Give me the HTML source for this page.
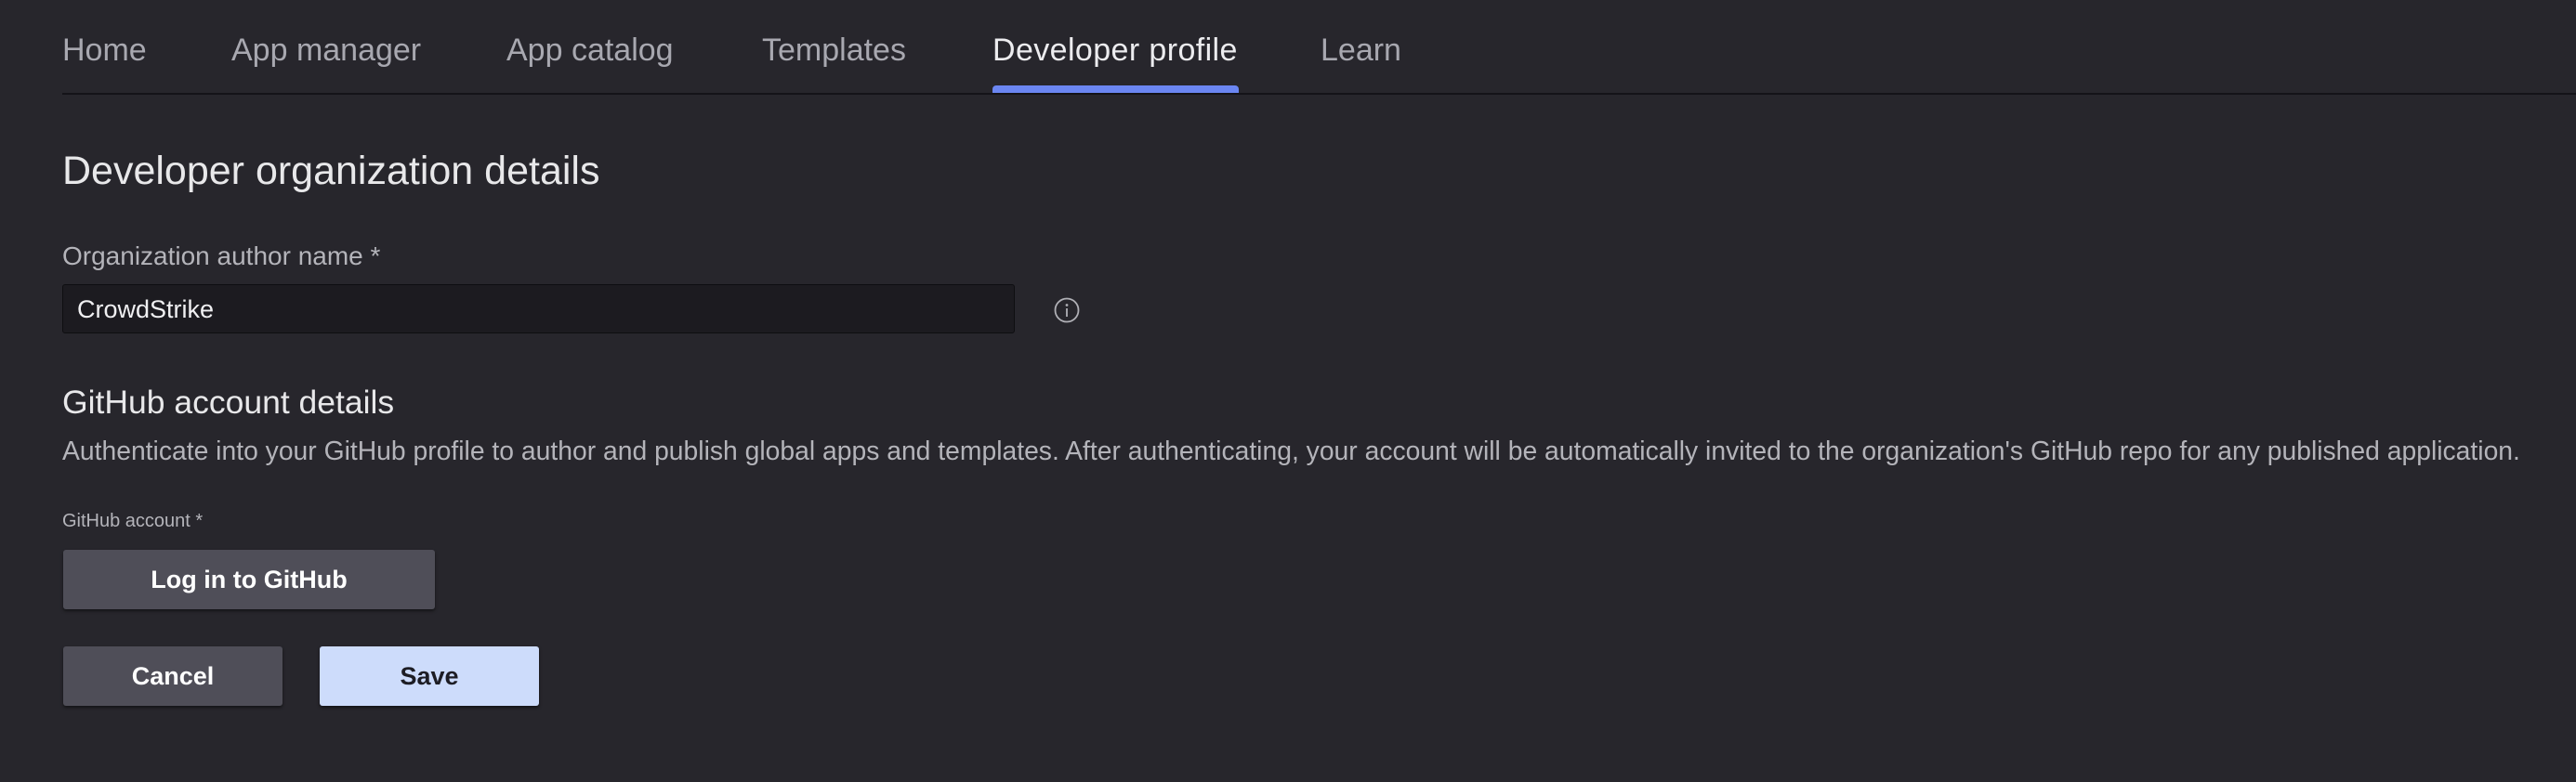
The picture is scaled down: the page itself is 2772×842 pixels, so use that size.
<!DOCTYPE html>
<html><head><meta charset="utf-8"><style>
html,body{margin:0;padding:0}
body{width:2772px;height:842px;background:#27262c;font-family:"Liberation Sans",Arial,sans-serif;position:relative;overflow:hidden;color:#e6e6e9}
.a{position:absolute;white-space:nowrap}
.nav{top:32px;font-size:34px;color:#a8a8b0;line-height:44px}
.btn{position:absolute;background:#4f4e58;color:#fff;font-weight:bold;font-size:27px;text-align:center;border-radius:3px;box-shadow:0 2px 3px rgba(0,0,0,.5)}
</style></head><body>
<div class="a nav" style="left:67px">Home</div>
<div class="a nav" style="left:249px">App manager</div>
<div class="a nav" style="left:545px">App catalog</div>
<div class="a nav" style="left:820px">Templates</div>
<div class="a nav" style="left:1068px;color:#ececef;letter-spacing:0.4px">Developer profile</div>
<div class="a nav" style="left:1421px">Learn</div>
<div class="a" style="left:1068px;top:92px;width:265px;height:8px;background:#6b86f2;border-radius:4px 4px 0 0"></div>
<div class="a" style="left:67px;top:100px;width:2705px;height:2px;background:#141318"></div>

<div class="a" style="left:67px;top:157px;font-size:43px;line-height:54px;color:#e8e8ea">Developer organization details</div>
<div class="a" style="left:67px;top:258px;font-size:28px;line-height:36px;color:#b4b4ba">Organization author name *</div>
<div class="a" style="left:67px;top:306px;width:1023px;height:51px;background:#1c1b20;border:1px solid #0e0e11;border-radius:3px"></div>
<div class="a" style="left:83px;top:315px;font-size:27px;line-height:36px;color:#f0f0f2">CrowdStrike</div>
<svg class="a" style="left:1133px;top:319px" width="30" height="30" viewBox="0 0 30 30"><circle cx="15" cy="15" r="12.5" fill="none" stroke="#b0b0b6" stroke-width="1.8"/><circle cx="15" cy="9.5" r="1.4" fill="#b0b0b6"/><path d="M15 13v9" stroke="#b0b0b6" stroke-width="1.8"/></svg>

<div class="a" style="left:67px;top:411px;font-size:35.5px;line-height:44px;color:#e8e8ea">GitHub account details</div>
<div class="a" style="left:67px;top:467px;font-size:28.3px;line-height:36px;color:#b4b4ba">Authenticate into your GitHub profile to author and publish global apps and templates. After authenticating, your account will be automatically invited to the organization's GitHub repo for any published application.</div>
<div class="a" style="left:67px;top:547px;font-size:20px;line-height:28px;color:#b4b4ba">GitHub account *</div>
<div class="btn" style="left:68px;top:592px;width:400px;height:64px;line-height:64px">Log in to GitHub</div>
<div class="btn" style="left:68px;top:696px;width:236px;height:64px;line-height:64px">Cancel</div>
<div class="btn" style="left:344px;top:696px;width:236px;height:64px;line-height:64px;background:#cddcfb;color:#1d1d24">Save</div>
</body></html>
